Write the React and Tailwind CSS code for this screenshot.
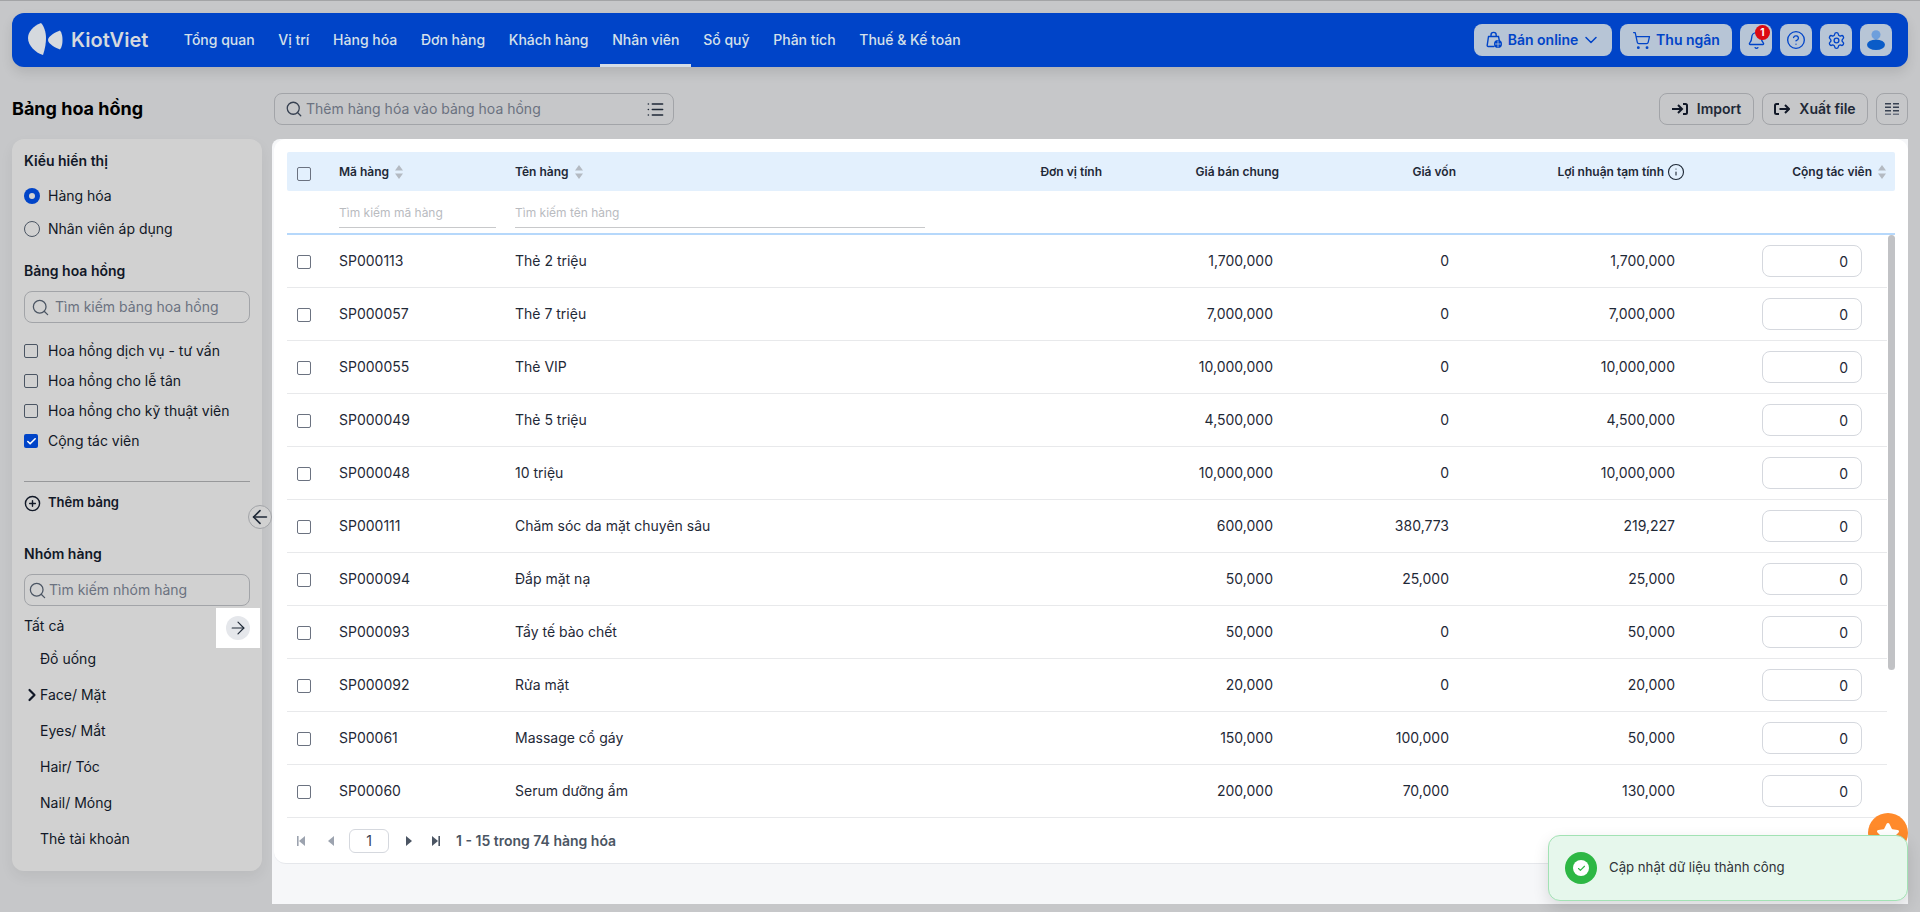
import React from "react";
import {
  ArrowLeft, ArrowRight, Bell, ChevronDown, ChevronRight, CircleHelp, CirclePlus, Info,
  List, Search, Settings, ShoppingCart, Check, Star,
} from "lucide-react";

const NAV = ["Tổng quan", "Vị trí", "Hàng hóa", "Đơn hàng", "Khách hàng", "Nhân viên", "Sổ quỹ", "Phân tích", "Thuế & Kế toán"];
const TABLES = [
  { name: "Hoa hồng dịch vụ - tư vấn" },
  { name: "Hoa hồng cho lễ tân" },
  { name: "Hoa hồng cho kỹ thuật viên" },
  { name: "Cộng tác viên", on: true },
];
const GROUPS = ["Đồ uống", "Face/ Mặt", "Eyes/ Mắt", "Hair/ Tóc", "Nail/ Móng", "Thẻ tài khoản"];
const ROWS = [
  ["SP000113", "Thẻ 2 triệu", "1,700,000", "0", "1,700,000"],
  ["SP000057", "Thẻ 7 triệu", "7,000,000", "0", "7,000,000"],
  ["SP000055", "Thẻ VIP", "10,000,000", "0", "10,000,000"],
  ["SP000049", "Thẻ 5 triệu", "4,500,000", "0", "4,500,000"],
  ["SP000048", "10 triệu", "10,000,000", "0", "10,000,000"],
  ["SP000111", "Chăm sóc da mặt chuyên sâu", "600,000", "380,773", "219,227"],
  ["SP000094", "Đắp mặt nạ", "50,000", "25,000", "25,000"],
  ["SP000093", "Tẩy tế bào chết", "50,000", "0", "50,000"],
  ["SP000092", "Rửa mặt", "20,000", "0", "20,000"],
  ["SP00061", "Massage cổ gáy", "150,000", "100,000", "50,000"],
  ["SP00060", "Serum dưỡng ẩm", "200,000", "70,000", "130,000"],
];

function Logo() {
  return (
    <svg width="35" height="34" viewBox="0 0 35 34" className="shrink-0">
      <path d="M13 0C5 3 0 9 0 15c0 8 8 15 15 17 2-6 3-12 3-17C18 9 16 3 13 0z" fill="#d5d9de" />
      <path d="M32 7.5C34 10 34.5 14 34.5 17S34 24 32 26.5C28 25 20 21 20 17S28 9 32 7.5z" fill="#d5d9de" />
    </svg>
  );
}

function BagIcon() {
  return (
    <svg width="18" height="18" viewBox="0 0 18 18" fill="none" stroke="#0044c8" strokeWidth="1.4" className="shrink-0">
      <path d="M3.5 5.5h10l1 5M9 15.5H3.2a1 1 0 0 1-1-1.2l1.3-8.8" strokeLinecap="round" />
      <path d="M6 5.5V4a2.6 2.6 0 0 1 5.2 0v1.5" />
      <circle cx="13" cy="13" r="4" fill="#0044c8" stroke="none" />
      <path d="M13 9.5v7M10 13h6" stroke="#b7c5d6" strokeWidth="0.8" />
    </svg>
  );
}

function Avatar() {
  return (
    <svg width="32" height="32" viewBox="0 0 32 32">
      <circle cx="16" cy="10.7" r="4.5" fill="#6e9fdc" />
      <ellipse cx="16" cy="20.7" rx="9" ry="5.3" fill="#0a5cc8" />
    </svg>
  );
}

function ImportIcon() {
  return (
    <svg width="16" height="12" viewBox="0 0 16 12" fill="none" stroke="#111827" strokeWidth="2" className="shrink-0">
      <path d="M0 6h9.5M6 2l4 4-4 4" />
      <path d="M11 1h2.5A1.5 1.5 0 0 1 15 2.5v7a1.5 1.5 0 0 1-1.5 1.5H11" />
    </svg>
  );
}

function ExportIcon() {
  return (
    <svg width="16" height="12" viewBox="0 0 16 12" fill="none" stroke="#111827" strokeWidth="2" className="shrink-0">
      <path d="M5 1H2.5A1.5 1.5 0 0 0 1 2.5v7A1.5 1.5 0 0 0 2.5 11H5" />
      <path d="M5.5 6H15M11 2l4 4-4 4" />
    </svg>
  );
}

function ColumnsIcon() {
  return (
    <svg width="14" height="12" viewBox="0 0 14 12" fill="#374151">
      <path d="M0 0h6v1.5H0zM8 0h6v1.5H8zM0 3.5h6V5H0zM8 3.5h6V5H8zM0 7h6v1.5H0zM8 7h6v1.5H8z" />
      <path d="M0 10.5h6V12H0zM8 10.5h6V12H8z" fill="#6b7280" />
    </svg>
  );
}

function SortIcon() {
  return (
    <svg width="8" height="14" viewBox="0 0 8 14" fill="#b4bac2" className="shrink-0">
      <path d="M4 0l4 5.5H0zM4 14l4-5.5H0z" />
    </svg>
  );
}

function PageIcon({ dir, end, dim }) {
  const color = dim ? "#9ca3af" : "#4b5563";
  return (
    <svg width="8" height="10" viewBox="0 0 8 10" fill={color} className={dir === "left" ? "rotate-180" : ""}>
      <path d={end ? "M0 0l6 5-6 5z" : "M1 0l6 5-6 5z"} />
      {end && <path d="M6.4 0H8v10H6.4z" />}
    </svg>
  );
}

function Box({ checked, tone }) {
  if (checked)
    return (
      <span className="flex h-[14px] w-[14px] shrink-0 items-center justify-center rounded-[2px] bg-[#0044c8]">
        <Check size={11} strokeWidth={3.5} color="#fff" />
      </span>
    );
  return <span className={`block h-[14px] w-[14px] shrink-0 rounded-[2px] border ${tone}`} />;
}

function SideSearch({ placeholder, iconGap }) {
  return (
    <div className={`flex h-8 items-center rounded-lg border border-[#a2a4a8] ${iconGap}`}>
      <Search size={19} strokeWidth={1.6} color="#4b5563" className="shrink-0" />
      <input placeholder={placeholder} className="w-full min-w-0 bg-transparent text-sm outline-none placeholder:text-[#6b7280]" />
    </div>
  );
}

function Sidebar() {
  return (
    <aside className="relative flex h-[732px] w-[250px] shrink-0 flex-col rounded-xl bg-[#d1d1d1] px-3 pt-3 text-[#111827] shadow-[0_6px_14px_rgba(0,0,0,0.06)]">
      <h3 className="h-5 text-sm leading-5 font-semibold">Kiểu hiển thị</h3>
      <div className="mt-[8px] flex h-[33px] items-center gap-2 text-sm">
        <span className="flex h-4 w-4 items-center justify-center rounded-full bg-[#0044c8]">
          <span className="h-[6px] w-[6px] rounded-full bg-[#d1d1d1]" />
        </span>
        Hàng hóa
      </div>
      <div className="flex h-[33px] items-center gap-2 text-sm">
        <span className="h-4 w-4 rounded-full border border-[#4b5563]" />
        Nhân viên áp dụng
      </div>

      <h3 className="mt-[16px] h-5 text-sm leading-5 font-semibold">Bảng hoa hồng</h3>
      <div className="mt-2.5">
        <SideSearch placeholder="Tìm kiếm bảng hoa hồng" iconGap="gap-[5px] pl-[6px]" />
      </div>
      <div className="mt-[13px] flex flex-col">
        {TABLES.map((t) => (
          <label key={t.name} className="flex h-[30px] items-center gap-2.5 text-sm">
            <Box checked={t.on} tone="border-[#4b5563]" />
            {t.name}
          </label>
        ))}
      </div>
      <div className="mt-[25px] h-px bg-[#97989a]" />
      <div className="mt-[11px] flex h-5 items-center gap-[7px] text-[13px] font-semibold">
        <CirclePlus size={17} strokeWidth={2} />
        Thêm bảng
      </div>

      <h3 className="mt-[31px] h-5 text-sm leading-5 font-semibold">Nhóm hàng</h3>
      <div className="mt-2.5">
        <SideSearch placeholder="Tìm kiếm nhóm hàng" iconGap="gap-[2px] pl-[3px]" />
      </div>
      <div className="mt-1 flex h-[31px] items-center text-sm">Tất cả</div>
      {GROUPS.map((g) => (
        <div key={g} className="relative flex h-9 items-center pl-4 text-sm">
          {g === "Face/ Mặt" && <ChevronRight size={20} strokeWidth={2.6} className="absolute left-[-2px]" />}
          {g}
        </div>
      ))}

      {/* nut thu gon cot trai */}
      <button className="absolute top-[366px] right-[-10px] flex h-6 w-6 items-center justify-center rounded-full border border-[#a2a4a8] bg-[#d1d1d1]">
        <ArrowLeft size={22} strokeWidth={1.8} color="#1f2937" />
      </button>
      {/* o sang cua tour huong dan */}
      <div className="absolute top-[469px] left-[204px] flex h-10 w-[44px] items-center justify-center bg-white">
        <span className="flex h-6 w-6 items-center justify-center rounded-full bg-[#e5e7eb]">
          <ArrowRight size={20} strokeWidth={1.4} color="#1f2937" />
        </span>
      </div>
    </aside>
  );
}

function TopBar() {
  return (
    <header className="mx-3 mt-3 flex h-[54px] items-center rounded-xl bg-[#0044c8] pr-4 pl-4 shadow-[0_6px_12px_rgba(0,0,0,0.1)]">
      <Logo />
      <span className="ml-[8px] w-[88px] text-xl font-semibold text-[#d5d9de]">KiotViet</span>
      <nav className="ml-[13px] flex h-full items-stretch">
        {NAV.map((n) => (
          <a
            key={n}
            className={`flex items-center border-b-[3px] px-[11.85px] text-sm font-medium text-[#d5e0ea] ${n === "Nhân viên" ? "border-[#d5dde6]" : "border-transparent"}`}
          >
            <span className="pt-[3px]">{n}</span>
          </a>
        ))}
      </nav>
      <div className="ml-auto flex items-center gap-2 text-sm font-semibold text-[#0044c8]">
        <button className="flex h-8 w-[138px] items-center justify-center gap-[5px] rounded-lg bg-[#b7c5d6]">
          <BagIcon />
          Bán online
          <ChevronDown size={20} strokeWidth={1.8} className="ml-[-2px]" />
        </button>
        <button className="flex h-8 w-[112px] items-center justify-center gap-[5px] rounded-lg bg-[#b7c5d6]">
          <ShoppingCart size={19} strokeWidth={1.6} />
          Thu ngân
        </button>
        <button className="relative flex h-8 w-8 items-center justify-center rounded-lg bg-[#b7c5d6]">
          <Bell size={19} strokeWidth={1.7} />
          <span className="absolute top-[1px] left-[15px] flex h-[15px] w-[15px] items-center justify-center rounded-full bg-[#dc0a12] text-[10px] font-bold text-white">1</span>
        </button>
        <button className="flex h-8 w-8 items-center justify-center rounded-lg bg-[#b7c5d6]">
          <CircleHelp size={20} strokeWidth={1.6} />
        </button>
        <button className="flex h-8 w-8 items-center justify-center rounded-lg bg-[#b7c5d6]">
          <Settings size={19} strokeWidth={1.7} />
        </button>
        <button className="flex h-8 w-8 items-center justify-center rounded-lg bg-[#b7c5d6]">
          <Avatar />
        </button>
      </div>
    </header>
  );
}

function Toolbar() {
  return (
    <div className="mx-3 mt-[26px] flex h-8 items-center">
      <h1 className="w-[262px] shrink-0 text-lg font-bold text-black">Bảng hoa hồng</h1>
      <div className="flex h-8 w-[400px] items-center gap-[3px] rounded-lg border border-[#a2a4a8] pr-2 pl-[10px]">
        <Search size={18} strokeWidth={1.7} color="#374151" className="shrink-0" />
        <input placeholder="Thêm hàng hóa vào bảng hoa hồng" className="w-full min-w-0 bg-transparent text-sm outline-none placeholder:text-[#6b7280]" />
        <List size={19} strokeWidth={2} color="#1f2937" className="shrink-0" />
      </div>
      <div className="ml-auto flex items-center gap-2 text-sm font-semibold text-[#1f2937]">
        <button className="flex h-8 w-[95px] items-center justify-center gap-[9px] rounded-lg border border-[#a2a4a8]">
          <ImportIcon />
          Import
        </button>
        <button className="flex h-8 w-[106px] items-center justify-center gap-[9px] rounded-lg border border-[#a2a4a8]">
          <ExportIcon />
          Xuất file
        </button>
        <button className="flex h-8 w-8 items-center justify-center rounded-lg border border-[#a2a4a8]">
          <ColumnsIcon />
        </button>
      </div>
    </div>
  );
}

function ProductRow({ row }) {
  return (
    <div className="grid h-[53px] grid-cols-[52px_176px_525px_62px_177px_177px_229px_202px] items-center border-b border-[#e8e9eb] text-sm text-[#1f2937]">
      <span className="mt-[2px] pl-[10px]"><Box tone="border-[#6b7280]" /></span>
      <span>{row[0]}</span>
      <span>{row[1]}</span>
      <span />
      <span className="pr-[6px] text-right">{row[2]}</span>
      <span className="pr-[7px] text-right">{row[3]}</span>
      <span className="pr-[10px] text-right">{row[4]}</span>
      <span className="flex justify-end pr-[25px]">
        <input
          defaultValue="0"
          className="h-8 w-[100px] rounded-lg border border-[#d5d8de] bg-white pr-[13px] text-right text-sm outline-none"
        />
      </span>
    </div>
  );
}

function ProductTable() {
  return (
    <section className="flex h-[725px] flex-col rounded-xl border-b border-[#e5e7eb] bg-white px-[13px] pt-[13px]">
      <div className="grid h-[39px] shrink-0 grid-cols-[52px_176px_525px_62px_177px_177px_229px_202px_8px] items-center rounded-[2px] bg-[#e3f0fd] text-xs font-semibold text-[#1f2937]">
        <span className="mt-[4px] pl-[10px]"><Box tone="border-[#6b7280]" /></span>
        <span className="flex items-center gap-[6px]">Mã hàng <SortIcon /></span>
        <span className="flex items-center gap-[6px]">Tên hàng <SortIcon /></span>
        <span className="text-right whitespace-nowrap">Đơn vị tính</span>
        <span className="text-right">Giá bán chung</span>
        <span className="text-right">Giá vốn</span>
        <span className="flex items-center justify-end gap-[3px]">Lợi nhuận tạm tính <Info size={18} strokeWidth={1.5} /></span>
        <span className="flex items-center justify-end gap-[6px] pr-px">Cộng tác viên <SortIcon /></span>
        <span />
      </div>
      <div className="grid h-[44px] shrink-0 grid-cols-[52px_176px_410px] border-b-2 border-[#b6d8fb]">
        <span />
        <input placeholder="Tìm kiếm mã hàng" className="mr-[19px] h-[37px] border-b border-[#c8c9cb] pt-1.5 text-xs outline-none placeholder:text-[#b9bbbf]" />
        <input placeholder="Tìm kiếm tên hàng" className="h-[37px] border-b border-[#c8c9cb] pt-1.5 text-xs outline-none placeholder:text-[#b9bbbf]" />
      </div>
      <div className="flex h-[583px] shrink-0">
        <div className="w-[1600px] shrink-0">
          {ROWS.map((r) => <ProductRow key={r[0]} row={r} />)}
        </div>
        <div className="ml-px w-[7px]">
          <div className="h-[435px] rounded-full bg-[#c1c2c5]" />
        </div>
      </div>
      <div className="flex flex-1 items-center pl-[10px] text-sm">
        <PageIcon dir="left" end dim />
        <span className="ml-[22px]"><PageIcon dir="left" dim /></span>
        <input defaultValue="1" className="ml-[14px] h-6 w-10 rounded-md border border-[#d5d8de] text-center text-sm text-[#374151] outline-none" />
        <span className="ml-[16px]"><PageIcon /></span>
        <span className="ml-[19px]"><PageIcon end /></span>
        <span className="ml-4 font-semibold text-[#4b5563]">1 - 15 trong 74 hàng hóa</span>
      </div>
    </section>
  );
}

export default function App() {
  return (
    <div className="relative h-[912px] w-[1920px] overflow-hidden border-t border-[#a3a4a6] bg-[#c6c7c9] font-['Inter',sans-serif]">
      <TopBar />
      <Toolbar />
      <div className="mx-3 mt-[14px] flex gap-[10px]">
        <Sidebar />
        <main className="h-[765px] flex-1 rounded-tl-lg bg-[#f6f7f9] pl-[2px]">
          <ProductTable />
        </main>
      </div>

      {/* nut noi va thong bao nam de len noi dung */}
      <div className="absolute top-[812px] left-[1868px] flex h-10 w-10 items-start justify-center rounded-full bg-[#ff8a2b] pt-[9px]">
        <Star size={24} fill="#fff" color="#fff" />
      </div>
      <div className="absolute top-[834px] left-[1548px] flex h-[66px] w-[360px] items-center gap-3 rounded-xl border border-[#a2e2b4] bg-[#e6f7ec] pl-4 text-[13.2px] text-[#2f3338] shadow-[0_6px_16px_rgba(0,0,0,0.12)]">
        <span className="flex h-8 w-8 items-center justify-center rounded-full bg-[#2db744]">
          <span className="flex h-4 w-4 items-center justify-center rounded-full bg-white">
            <Check size={9} strokeWidth={3} color="#2db744" />
          </span>
        </span>
        Cập nhật dữ liệu thành công
      </div>
    </div>
  );
}
